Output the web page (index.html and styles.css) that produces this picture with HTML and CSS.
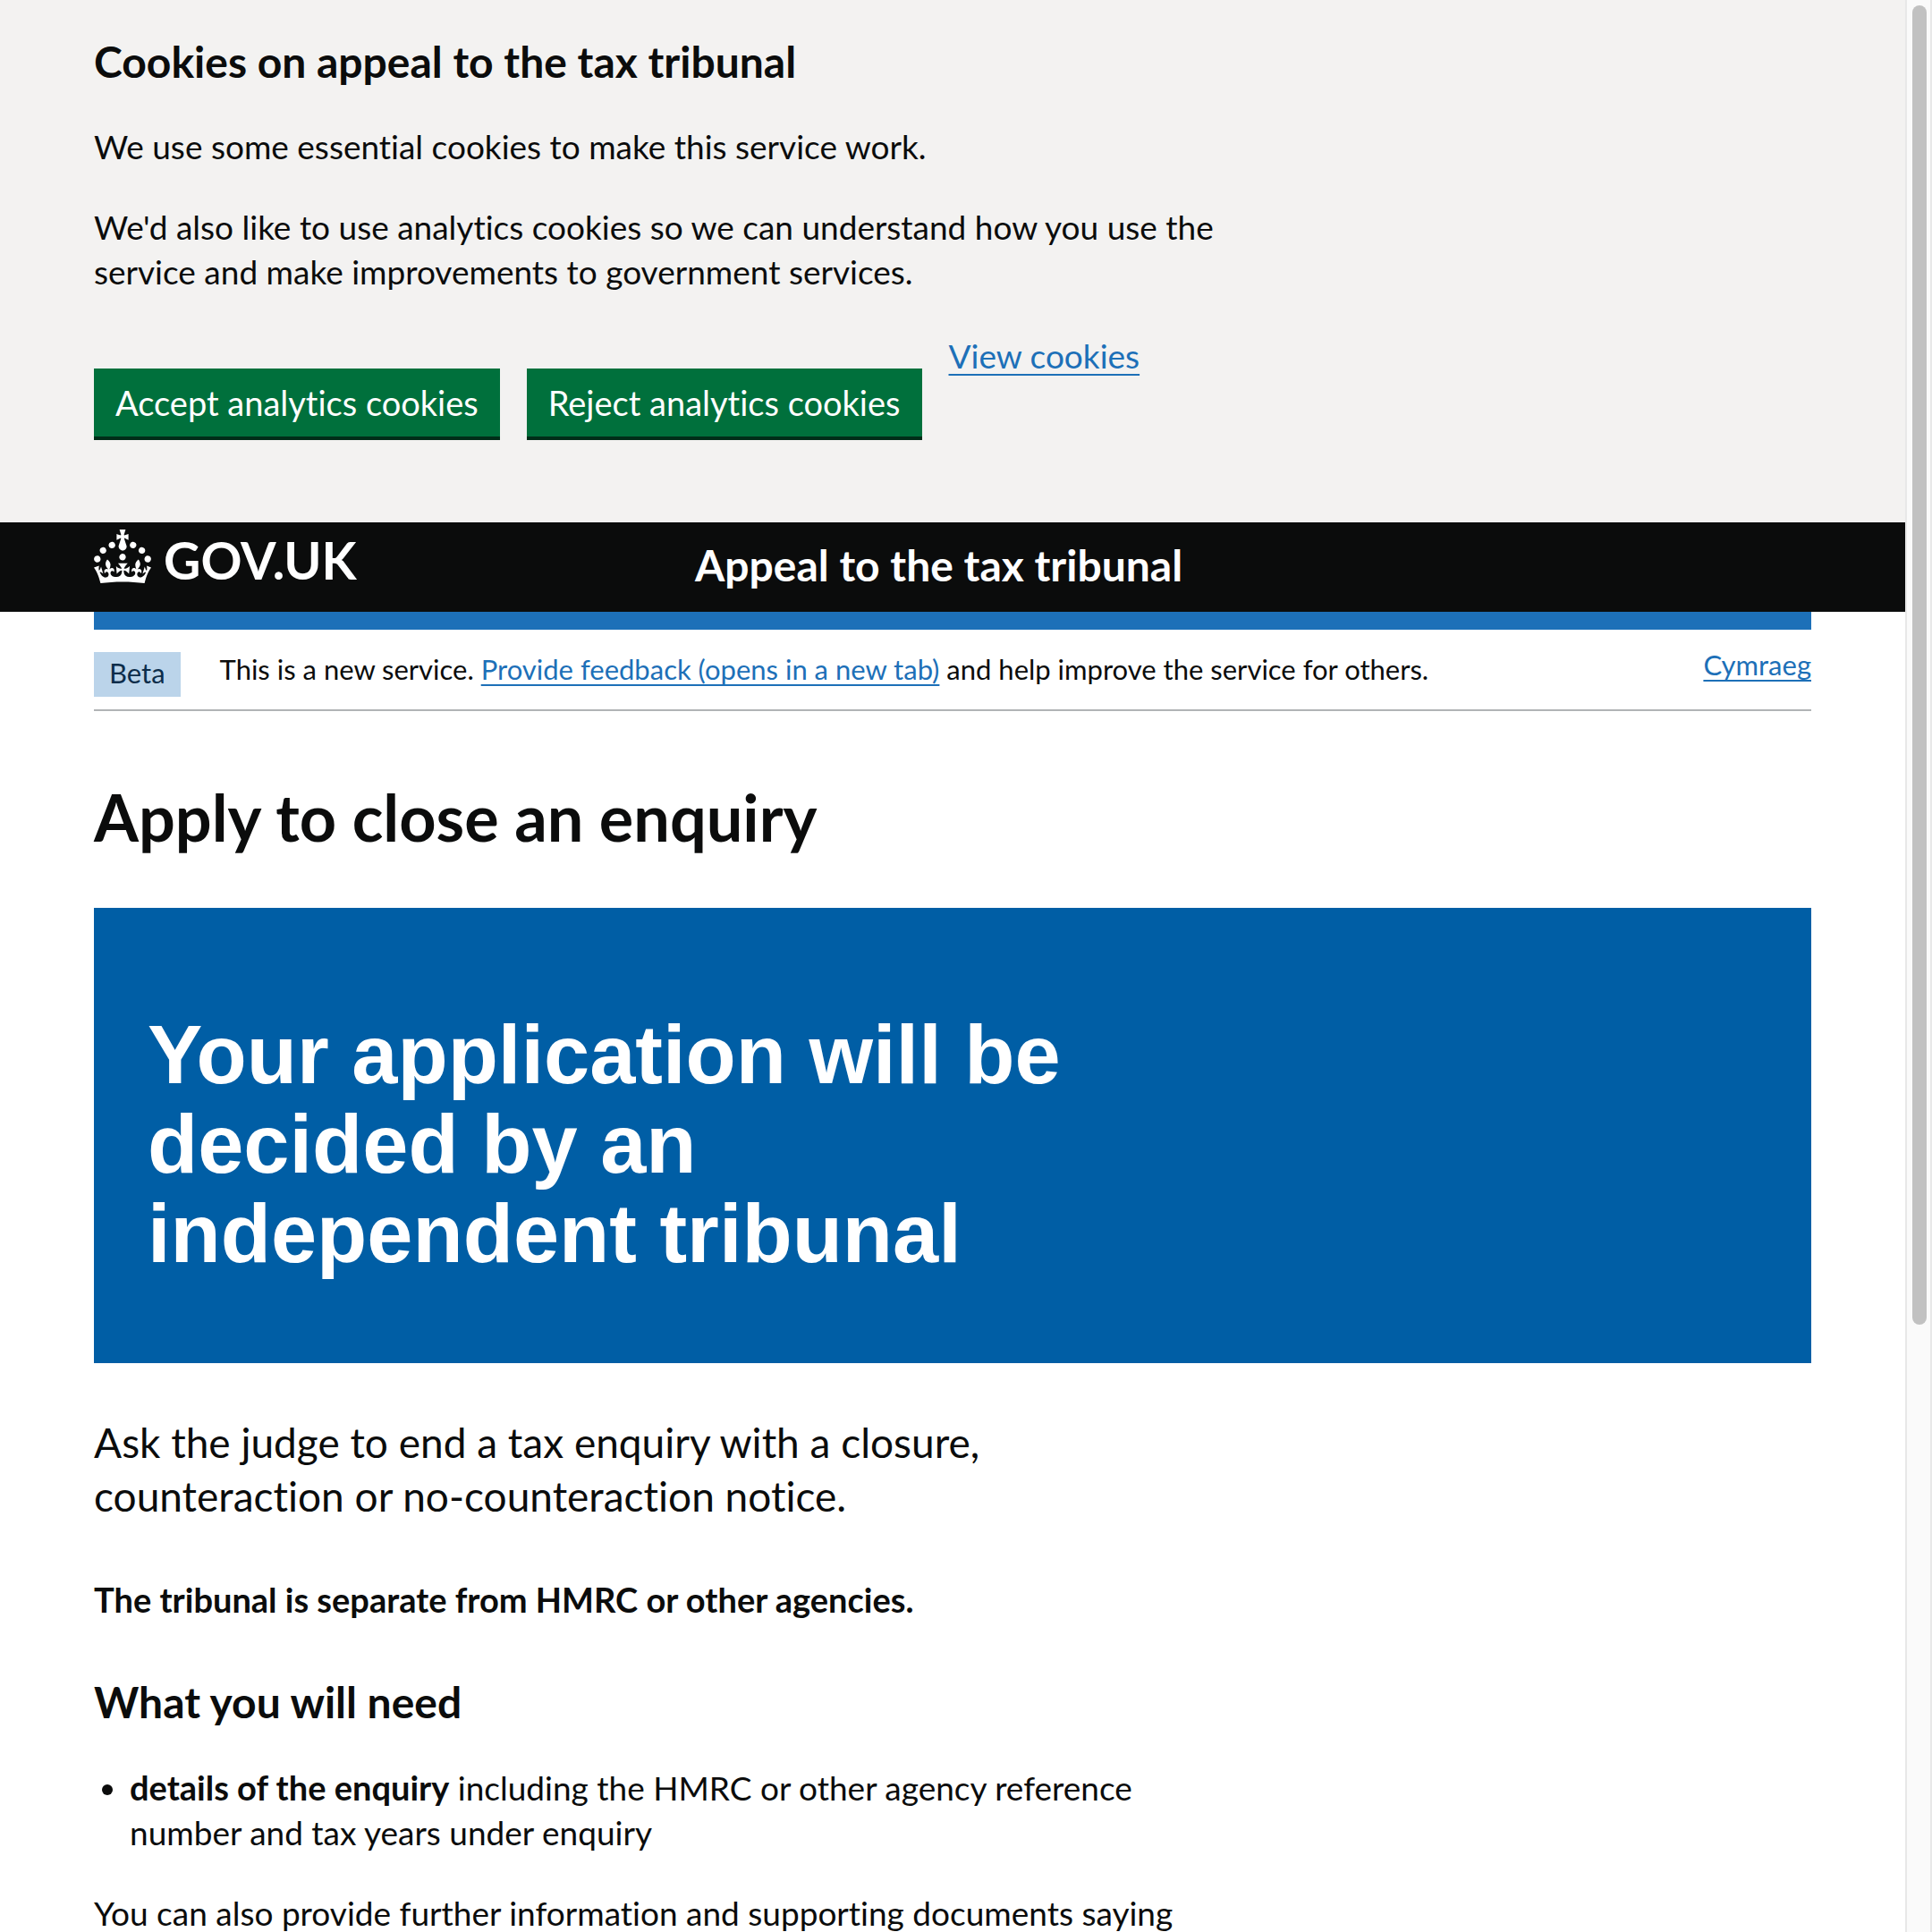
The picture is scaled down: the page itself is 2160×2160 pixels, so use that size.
FILE: index.html
```html
<!DOCTYPE html>
<html lang="en">
<head>
<meta charset="utf-8">
<meta name="viewport" content="width=device-width, initial-scale=1">
<title>Apply to close an enquiry - Appeal to the tax tribunal - GOV.UK</title>
<link rel="stylesheet" href="styles.css">
</head>
<body>
<div class="page">
  <section class="cookie-banner" aria-label="Cookies on appeal to the tax tribunal">
    <div class="container">
      <h2 class="heading-m">Cookies on appeal to the tax tribunal</h2>
      <div class="two-thirds">
        <p class="body-text">We use some essential cookies to make this service work.</p>
        <p class="body-text">We'd also like to use analytics cookies so we can understand how you use the service and make improvements to government services.</p>
      </div>
      <div class="button-group">
        <button class="button" type="button">Accept analytics cookies</button>
        <button class="button" type="button">Reject analytics cookies</button>
        <a class="link" href="#cookies">View cookies</a>
      </div>
    </div>
  </section>

  <header class="header">
    <div class="container header-grid">
      <a class="logo" href="#home">
        <svg class="crown" viewBox="0 0 32 30" aria-hidden="true"><path fill="currentColor" d="M22.6 10.4c-1 .4-2-.1-2.4-1-.4-.9.1-2 1-2.4.9-.4 2 .1 2.4 1s-.1 2-1 2.4m-5.9 6.7c-.9.4-2-.1-2.4-1-.4-.9.1-2 1-2.4.9-.4 2 .1 2.4 1s-.1 2-1 2.4m10.8-3.7c-1 .4-2-.1-2.4-1-.4-.9.1-2 1-2.4.9-.4 2 .1 2.4 1s0 2-1 2.4m3.3 4.8c-1 .4-2-.1-2.4-1-.4-.9.1-2 1-2.4.9-.4 2 .1 2.4 1s-.1 2-1 2.4M17 4.7l2.3 1.2V2.5l-2.3.7-.2-.2.9-3h-3.4l.9 3-.2.2c-.1.1-2.3-.7-2.3-.7v3.4L15 4.7c.1.1.1.2.2.2l-1.3 4c-.1.2-.1.4-.1.6 0 1.1.8 2 1.9 2.2h.7c1-.2 1.9-1.1 1.9-2.1 0-.2 0-.4-.1-.6l-1.3-4c-.1-.2 0-.2.1-.3m-7.6 5.7c.9.4 2-.1 2.4-1 .4-.9-.1-2-1-2.4-.9-.4-2 .1-2.4 1s0 2 1 2.4m-5 3c.9.4 2-.1 2.4-1 .4-.9-.1-2-1-2.4-.9-.4-2 .1-2.4 1s.1 2 1 2.4m-3.2 4.8c.9.4 2-.1 2.4-1 .4-.9-.1-2-1-2.4-.9-.4-2 .1-2.4 1s0 2 1 2.4m14.8 11c4.4 0 8.6.3 12.3.8 1.1-4.5 2.4-7 3.7-8.8l-2.5-.9c.2 1.3.3 1.9 0 2.7-.4-.4-.8-1.1-1.1-2.3l-1.2 4c.7-.5 1.3-.8 2-.9-1.1 2.5-2.6 3.1-3.5 3-1.1-.2-1.7-1.2-1.5-2.1.3-1.2 1.5-1.5 2.1-.1 1.1-2.3-.8-3-2-2.3 1.9-1.9 2.1-3.5.6-5.6-2.1 1.6-2.1 3.2-1.2 5.5-1.2-1.4-3.2-.6-2.5 1.6.9-1.4 2.1-.5 1.9.8-.2 1.1-1.7 2.1-3.5 1.9-2.7-.2-2.9-2.1-2.9-3.6.7-.1 1.9.5 2.9 1.9l.4-4.3c-1.1 1.1-2.1 1.4-3.2 1.4.4-1.2 2.1-3 2.1-3h-5.4s1.7 1.9 2.1 3c-1.1 0-2.1-.2-3.2-1.4l.4 4.3c1-1.4 2.2-2 2.9-1.9-.1 1.5-.2 3.4-2.9 3.6-1.9.2-3.4-.8-3.5-1.9-.2-1.3 1-2.2 1.9-.8.7-2.3-1.2-3-2.5-1.6.9-2.2.9-3.9-1.2-5.5-1.5 2-1.3 3.7.6 5.6-1.2-.7-3.1 0-2 2.3.6-1.4 1.8-1.1 2.1.1.2.9-.3 1.9-1.5 2.1-.9.2-2.4-.5-3.5-3 .6 0 1.2.3 2 .9l-1.2-4c-.3 1.1-.7 1.9-1.1 2.3-.3-.8-.2-1.4 0-2.7l-2.9.9C1.3 23 2.6 25.5 3.7 30c3.7-.5 7.9-.8 12.3-.8"/></svg>
        <span class="logo-text">GOV.UK</span>
      </a>
      <a class="service-name" href="#service">Appeal to the tax tribunal</a>
    </div>
  </header>

  <div class="container">
    <div class="phase-banner">
      <strong class="tag">Beta</strong>
      <span class="phase-text">This is a new service. <a class="link" href="#feedback">Provide feedback (opens in a new tab)</a> and help improve the service for others.</span>
      <a class="link language" href="#cy" lang="cy">Cymraeg</a>
    </div>

    <main>
      <h1 class="heading-l">Apply to close an enquiry</h1>
      <div class="panel">
        <p class="panel-title">Your application will be decided by an independent tribunal</p>
      </div>
      <div class="two-thirds">
        <p class="lead">Ask the judge to end a tax enquiry with a closure, counteraction or no-counteraction notice.</p>
        <h3 class="heading-s">The tribunal is separate from HMRC or other agencies.</h3>
        <h2 class="heading-m">What you will need</h2>
        <ul class="list">
          <li><strong class="term">details of the enquiry</strong> including the HMRC or other agency reference number and tax years under enquiry</li>
        </ul>
        <p class="body-text">You can also provide further information and supporting documents saying</p>
      </div>
    </main>
  </div>
</div>
<div class="scrollbar" aria-hidden="true"><div class="scrollbar-thumb"></div></div>
</body>
</html>
```
FILE: styles.css
```css
* {
  box-sizing: border-box;
}

body {
  margin: 0;
  height: 100vh;
  overflow: hidden;
  background: #fff;
  color: #0b0c0c;
  font-family: Lato, "Liberation Sans", sans-serif;
  font-size: 37px;
  line-height: 50px;
  font-variant-ligatures: none;
}

h1, h2, h3, p, ul {
  margin: 0;
}

.page {
  margin-right: 30px;
}

.container {
  max-width: 1920px;
  margin: 0 auto;
}

.two-thirds {
  max-width: 1280px;
}

.heading-l {
  padding: 78px 0 62px;
  font-size: 72px;
  line-height: 80px;
}

.heading-m {
  margin-bottom: 40px;
  font-size: 48px;
  line-height: 60px;
}

.heading-s {
  margin-bottom: 60px;
  font-size: 38px;
  line-height: 50px;
}

.body-text {
  margin-bottom: 40px;
}

.link {
  color: #1d70b8;
  text-decoration: underline;
  text-decoration-thickness: 2px;
  text-underline-offset: 6px;
}

/* Cookie banner */
.cookie-banner {
  padding: 39px 0 96px;
  background: #f3f2f1;
}

.button-group {
  display: flex;
  align-items: flex-start;
  gap: 30px;
  margin-top: 44px;
}

.button {
  margin: 39px 0 0;
  padding: 13px 24px;
  border: 0;
  background: #00703c;
  box-shadow: 0 4px 0 #002d18;
  color: #fff;
  font: inherit;
  font-size: 38px;
}

/* Header */
.header {
  background: #0b0c0c;
  color: #fff;
}

.header-grid {
  display: grid;
  grid-template-columns: 35% 1fr;
  align-items: start;
  min-height: 100px;
}

.header::after {
  content: "";
  display: block;
  height: 20px;
  background: linear-gradient(#1d70b8, #1d70b8) center / 1920px 100% no-repeat #fff;
}

.logo {
  display: flex;
  gap: 14px;
  padding-top: 8px;
  color: #fff;
  text-decoration: none;
}

.crown {
  width: 64px;
  height: 60px;
}

.logo-text {
  font-size: 57px;
  font-weight: 700;
  line-height: 68px;
}

.service-name {
  padding-top: 18px;
  color: #fff;
  font-size: 48px;
  font-weight: 700;
  line-height: 60px;
  text-decoration: none;
}

/* Phase banner */
.phase-banner {
  display: flex;
  align-items: flex-start;
  padding: 19px 0 14px;
  border-bottom: 2px solid #b1b4b6;
  font-size: 31px;
  line-height: 40px;
}

.tag {
  margin: 6px 44px 0 0;
  padding: 0 17px 4px;
  background: #bbd4ea;
  color: #0c2d4a;
  font-weight: 400;
  line-height: 46px;
}

.phase-text {
  flex: 1;
  margin-top: 5px;
}

.phase-banner .link {
  text-underline-offset: 5px;
}

.language {
  text-decoration-skip-ink: none;
}

/* Main content */
.panel {
  padding: 114px 60px 95px;
  background: #005ea5;
  color: #fff;
}

.panel-title {
  max-width: 1180px;
  font-family: "Liberation Sans", Arial, sans-serif;
  font-size: 92px;
  font-weight: 700;
  line-height: 100px;
}

.lead {
  margin: 59px 0 60px;
  font-size: 46px;
  line-height: 60px;
}

.list {
  margin-bottom: 40px;
  padding-left: 40px;
}

.term {
  font-size: 38px;
}

/* Page scrollbar */
.scrollbar {
  position: fixed;
  top: 0;
  right: 0;
  bottom: 0;
  width: 30px;
  padding: 6px 4px 0 6px;
  border: solid #e8e8e8;
  border-width: 0 2px;
  background: #fafafa;
}

.scrollbar-thumb {
  width: 16px;
  height: 68.5%;
  border-radius: 8px;
  background: #c1c1c1;
}
```
